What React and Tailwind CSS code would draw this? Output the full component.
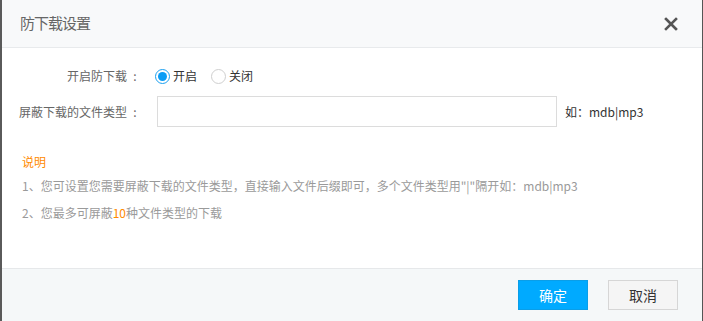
import React, { useState } from 'react';

const font = { fontFamily: '"Noto Sans CJK SC", "Noto Sans", sans-serif' };

const Radio = ({ checked, label, onClick }) => (
  <button type="button" onClick={onClick} className="flex items-center mr-[14px]">
    <span
      className={`w-[15px] h-[15px] rounded-full border flex items-center justify-center bg-white ${
        checked ? 'border-[#1a9ff0]' : 'border-[#cfcfcf]'
      }`}
    >
      {checked && <span className="w-[9px] h-[9px] rounded-full bg-[#0a9cf5]" />}
    </span>
    <span className="ml-[3px] text-[12px] text-[#333]">{label}</span>
  </button>
);

// label with a centred full-width colon, like the original page
const Label = ({ children }) => (
  <div className="w-[141px] flex justify-end text-[12px] text-[#666]">
    <span>{children}</span>
    <span className="w-[16px] text-center">:</span>
  </div>
);

export default function App() {
  const [enabled, setEnabled] = useState(true);

  return (
    <div
      className="h-[321px] w-[703px] flex flex-col bg-white border-l-2 border-r border-l-[#5a5a5a] border-r-[#555] overflow-hidden"
      style={font}
    >
      {/* Header */}
      <div className="h-[48px] shrink-0 flex items-center justify-between bg-[#f8f9fa] border-b border-[#e8eaec] pl-[18px] pr-[24px]">
        <span className="text-[15px] text-[#666] tracking-[-1px]">防下载设置</span>
        <svg width="14" height="14" viewBox="0 0 14 14" className="text-[#555]">
          <path d="M2 2 L12 12 M12 2 L2 12" stroke="currentColor" strokeWidth="2.6" strokeLinecap="square" />
        </svg>
      </div>

      {/* Body */}
      <div className="flex-1 pt-[13px]">
        <div className="flex items-center h-[30px]">
          <Label>开启防下载</Label>
          <div className="flex items-center pl-[12px]">
            <Radio checked={enabled} label="开启" onClick={() => setEnabled(true)} />
            <Radio checked={!enabled} label="关闭" onClick={() => setEnabled(false)} />
          </div>
        </div>
        <div className="flex items-center h-[31px] mt-[5px]">
          <Label>屏蔽下载的文件类型</Label>
          <input className="ml-[14px] w-[400px] h-[31px] border border-[#dcdcdc] outline-none px-2 text-[12px]" />
          <span className="ml-[8px] text-[12px] text-[#333]">如：mdb|mp3</span>
        </div>

        <div className="mt-[23px] pl-[20px] text-[12px]">
          <div className="h-[24px] leading-[24px] text-[#ff8a00]">说明</div>
          <div className="h-[24px] leading-[24px] text-[#9a9a9a]">
            1、您可设置您需要屏蔽下载的文件类型，直接输入文件后缀即可，多个文件类型用"|"隔开如：mdb|mp3
          </div>
          <div className="h-[26px] leading-[26px] text-[#9a9a9a] mt-[2px]">
            2、您最多可屏蔽<span className="text-[#ff8a00]">10</span>种文件类型的下载
          </div>
        </div>
      </div>

      {/* Footer */}
      <div className="h-[53px] shrink-0 flex items-center justify-end gap-[20px] bg-[#f5f8f9] border-t border-[#e6e8ea] pr-[24px]">
        <button className="w-[70px] h-[30px] bg-[#00aaff] border border-[#0a9ee8] text-white text-[14px]">确定</button>
        <button className="w-[70px] h-[30px] bg-[#f5f5f5] border border-[#d6d6d6] text-[#333] text-[14px]">取消</button>
      </div>
    </div>
  );
}
